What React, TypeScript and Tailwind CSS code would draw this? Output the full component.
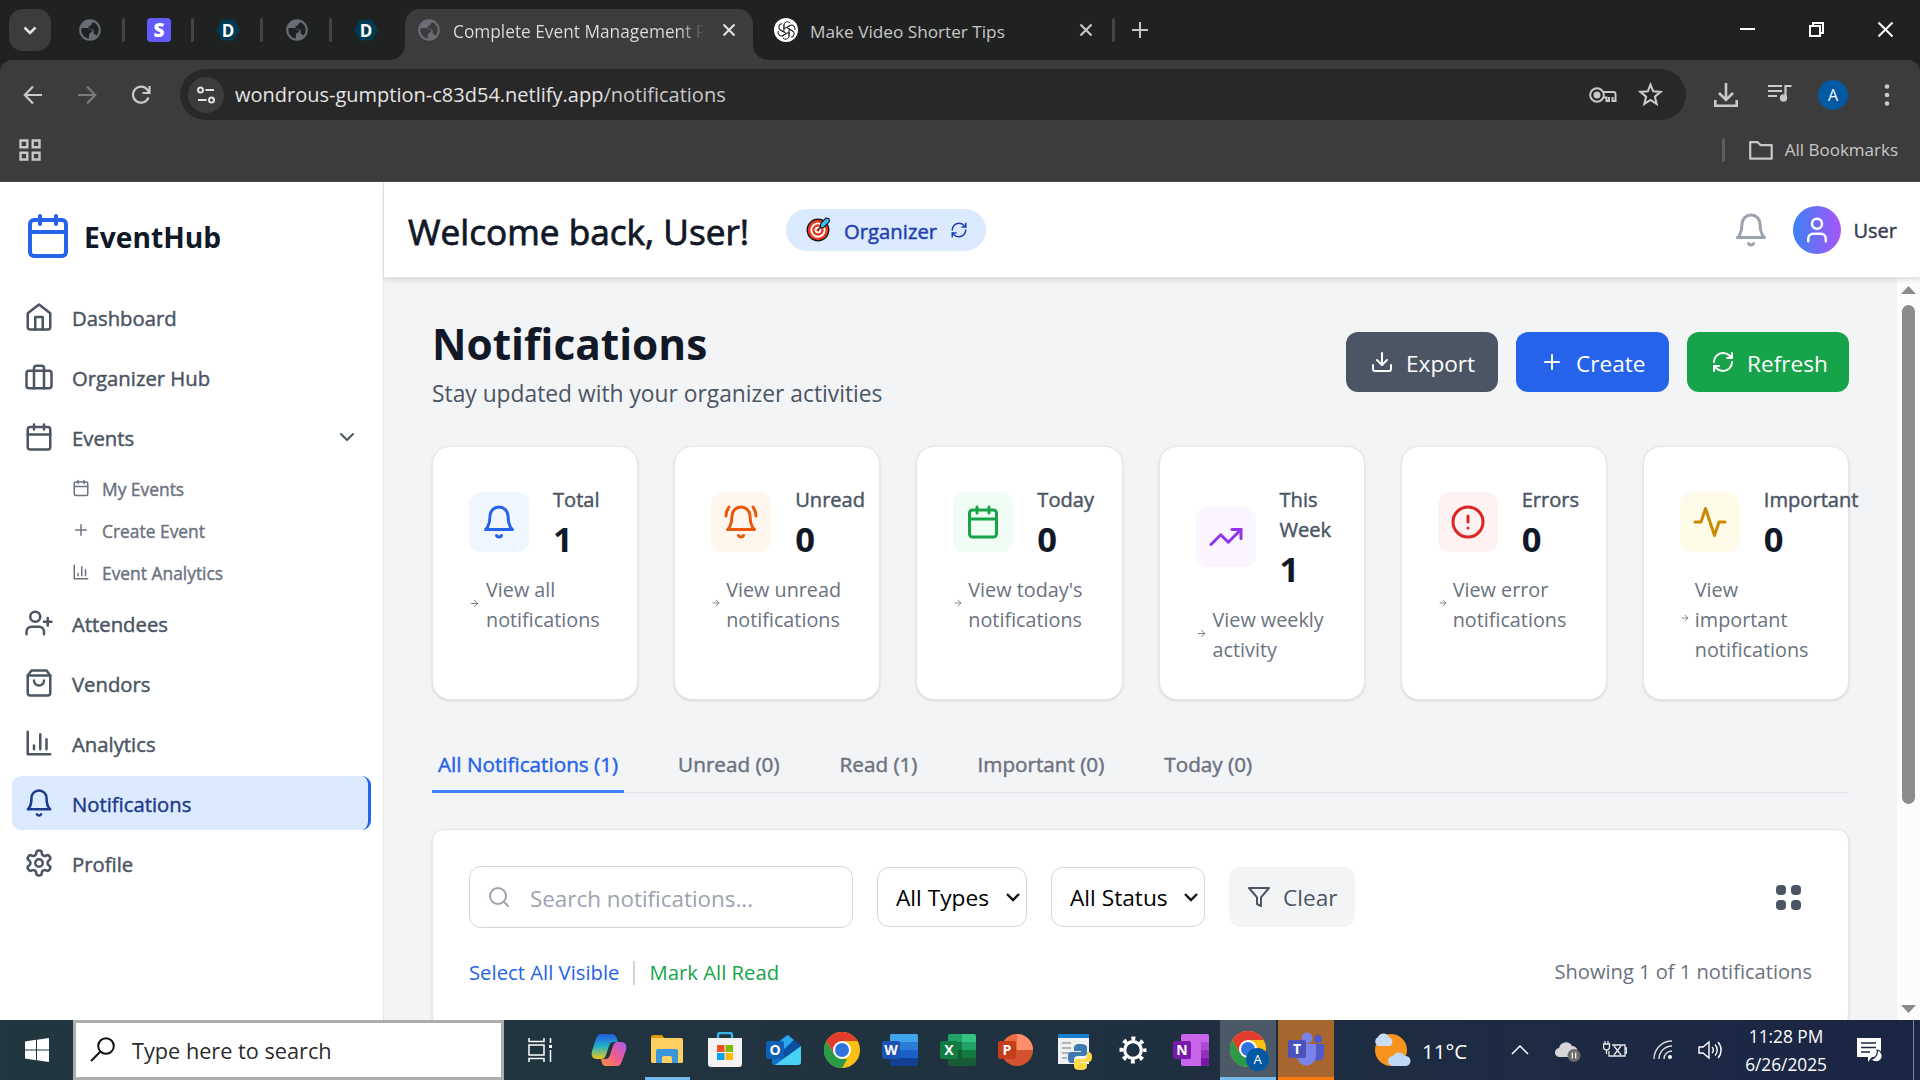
import React from 'react';
import {
  ArrowRight, ChevronDown, CircleAlert, Download, Plus, RefreshCw, Search, TrendingUp, User, UserPlus
} from 'lucide-react';
import { clsx } from 'clsx';

type IconProps = {
  className?: string;
  children?: React.ReactNode;
};

const Stroke = ({ className, children }: IconProps) => (
  <svg viewBox="0 0 24 24" fill="none" stroke="currentColor" strokeWidth="2" strokeLinecap="round" strokeLinejoin="round" className={clsx('shrink-0', className)}>
    {children}
  </svg>
);

const CalendarIcon = ({ className }: IconProps) => (
  <Stroke className={className}>
    <rect x="3" y="4" width="18" height="18" rx="2" />
    <path d="M16 2v4M8 2v4M3 10h18" />
  </Stroke>
);

const HomeIcon = ({ className }: IconProps) => (
  <Stroke className={className}>
    <path d="m3 9 9-7 9 7v11a2 2 0 0 1-2 2H5a2 2 0 0 1-2-2z" />
    <path d="M9 22V12h6v10" />
  </Stroke>
);

const BriefcaseIcon = ({ className }: IconProps) => (
  <Stroke className={className}>
    <rect x="2" y="7" width="20" height="14" rx="2" />
    <path d="M16 21V5a2 2 0 0 0-2-2h-4a2 2 0 0 0-2 2v16" />
  </Stroke>
);

const BagIcon = ({ className }: IconProps) => (
  <Stroke className={className}>
    <path d="M6 2 3 6v14a2 2 0 0 0 2 2h14a2 2 0 0 0 2-2V6l-3-4Z" />
    <path d="M3 6h18M16 10a4 4 0 0 1-8 0" />
  </Stroke>
);

const BarsIcon = ({ className }: IconProps) => (
  <Stroke className={className}>
    <path d="M3 3v18h18M18 17V9M13 17V5M8 17v-3" />
  </Stroke>
);

const BellIcon = ({ className }: IconProps) => (
  <Stroke className={className}>
    <path d="M6 8a6 6 0 0 1 12 0c0 7 3 9 3 9H3s3-2 3-9" />
    <path d="M10.3 21a1.94 1.94 0 0 0 3.4 0" />
  </Stroke>
);

const BellRingIcon = ({ className }: IconProps) => (
  <Stroke className={className}>
    <path d="M6 8a6 6 0 0 1 12 0c0 7 3 9 3 9H3s3-2 3-9" />
    <path d="M10.3 21a1.94 1.94 0 0 0 3.4 0M4 2C2.8 3.7 2 5.7 2 8M22 8c0-2.3-.8-4.3-2-6" />
  </Stroke>
);

const ActivityIcon = ({ className }: IconProps) => (
  <Stroke className={className}>
    <path d="M22 12h-4l-3 9L9 3l-3 9H2" />
  </Stroke>
);

const FunnelIcon = ({ className }: IconProps) => (
  <Stroke className={className}>
    <path d="M22 3H2l8 9.46V19l4 2v-8.54L22 3z" />
  </Stroke>
);

const SettingsIcon = ({ className }: IconProps) => (
  <Stroke className={className}>
    <path d="M12.22 2h-.44a2 2 0 0 0-2 2v.18a2 2 0 0 1-1 1.73l-.43.25a2 2 0 0 1-2 0l-.15-.08a2 2 0 0 0-2.73.73l-.22.38a2 2 0 0 0 .73 2.73l.15.1a2 2 0 0 1 1 1.72v.51a2 2 0 0 1-1 1.74l-.15.09a2 2 0 0 0-.73 2.73l.22.38a2 2 0 0 0 2.73.73l.15-.08a2 2 0 0 1 2 0l.43.25a2 2 0 0 1 1 1.73V20a2 2 0 0 0 2 2h.44a2 2 0 0 0 2-2v-.18a2 2 0 0 1 1-1.73l.43-.25a2 2 0 0 1 2 0l.15.08a2 2 0 0 0 2.73-.73l.22-.39a2 2 0 0 0-.73-2.73l-.15-.08a2 2 0 0 1-1-1.74v-.5a2 2 0 0 1 1-1.74l.15-.09a2 2 0 0 0 .73-2.73l-.22-.38a2 2 0 0 0-2.73-.73l-.15.08a2 2 0 0 1-2 0l-.43-.25a2 2 0 0 1-1-1.73V4a2 2 0 0 0-2-2z" />
    <circle cx="12" cy="12" r="3" />
  </Stroke>
);

/* ---------- browser ---------- */

const Globe = () => (
  <svg viewBox="0 0 24 24" className="size-[26px] shrink-0">
    <path fill="#6a6d73" d="M12 2C6.48 2 2 6.48 2 12s4.48 10 10 10 10-4.48 10-10S17.52 2 12 2zm-1 17.93c-3.95-.49-7-3.85-7-7.93 0-.62.08-1.21.21-1.79H9.5c1.6 0 1.5 1.29 3.5 1.29 1 0 1.5 1 1 1.8L12 15c-1 .5-1 1-1 2v2.93zm6.9-2.54c-.26-.81-1-1.39-1.9-1.39h-.5v-2.5c0-1.5-1-2.5-2.5-2.5-1.5 0-2.5-.5-2.5-1.5s.5-1.5 1.5-1.5c1.5 0 1-2 3-3.09C17.93 5.78 20 8.65 20 12c0 2.08-.8 3.97-2.1 5.39z" />
  </svg>
);

const HexFavicon = () => (
  <div className="relative flex size-[26px] items-center justify-center">
    <svg viewBox="0 0 26 26" className="absolute inset-0">
      <path fill="#003a52" d="M7 2.500h12L25 13l-6 10.500H7L1 13z" />
    </svg>
    <span className="relative text-[17px] leading-none font-bold text-white">D</span>
  </div>
);

const Favicon = ({ kind }: { kind: string }) => {
  if (kind === 'globe') return <Globe />;
  if (kind === 'hex') return <HexFavicon />;
  return (
    <div className="flex size-6 items-center justify-center rounded-[4px] bg-[#635bff] text-[19px] leading-none font-extrabold text-white">S</div>
  );
};

const CloseX = ({ className }: IconProps) => (
  <svg viewBox="0 0 14 14" className={clsx('size-[14px] shrink-0', className)} stroke="currentColor" strokeWidth="2.2">
    <path d="M1.500 1.500l11 11M12.500 1.500l-11 11" />
  </svg>
);

const pinned = ['globe', 'stripe', 'hex', 'globe', 'hex'];

const TabStrip = () => (
  <div className="flex h-[60px] bg-[#202221] text-[#c7c7c7]">
    <div className="mt-[9px] ml-[9px] flex size-[42px] items-center justify-center rounded-[14px] bg-[#3c3c3c]">
      <svg viewBox="0 0 14 9" className="h-[9px] w-[14px]" fill="none" stroke="#e3e3e3" strokeWidth="2.5"><path d="M1.500 1.500L7 7l5.500-5.500" /></svg>
    </div>
    <div className="ml-1 flex h-[60px] w-[350px] items-center">
      {pinned.map((kind, index) => (
        <React.Fragment key={index}>
          <div className="flex w-[66px] justify-center pl-1"><Favicon kind={kind} /></div>
          {index < pinned.length - 1 && <div className="ml-[1px] -mr-[1px] h-6 w-[3px] rounded bg-[#434443]" />}
        </React.Fragment>
      ))}
    </div>
    <div className="relative mt-[9px] flex h-[51px] w-[348px] items-center rounded-t-[15px] bg-[#3c3c3c] pr-[17px] pb-[9px] pl-[11px] text-[#dedede]">
      <svg viewBox="0 0 15 15" className="absolute bottom-0 -left-[15px] size-[15px]"><path fill="#3c3c3c" d="M15 0v15H0A15 15 0 0 0 15 0z" /></svg>
      <svg viewBox="0 0 15 15" className="absolute -right-[15px] bottom-0 size-[15px]"><path fill="#3c3c3c" d="M0 0v15h15A15 15 0 0 1 0 0z" /></svg>
      <Globe />
      <div className="ml-[11px] w-[252px] overflow-hidden bg-gradient-to-r from-[#dedede] from-90% to-[#3c3c3c] bg-clip-text pt-[4px] text-[17.3px] leading-[26px] whitespace-nowrap text-transparent">
        Complete Event Management P
      </div>
      <CloseX className="ml-auto" />
    </div>
    <div className="flex h-[60px] w-[362px] items-center pl-[21px]">
      <div className="flex size-6 items-center justify-center rounded-full bg-white">
        <svg viewBox="0 0 24 24" className="size-[19px]" fill="none" stroke="#222" strokeWidth="1.25">
          {[0, 60, 120, 180, 240, 300].map((angle) => (
            <path key={angle} d="M12.200 8.200L17 5.500M8.700 10V5.200a4.300 4.300 0 0 1 7.900-2.300M8.700 10v4" transform={`rotate(${angle} 12 12)`} />
          ))}
        </svg>
      </div>
      <span className="ml-3 pt-1 text-[17.2px] whitespace-nowrap">Make Video Shorter Tips</span>
      <CloseX className="ml-auto" />
      <div className="ml-[19px] h-6 w-[3px] rounded bg-[#434443]" />
    </div>
    <svg viewBox="0 0 16 16" className="mt-[22px] ml-[17px] size-4" stroke="currentColor" strokeWidth="2"><path d="M8 0v16M0 8h16" /></svg>
    <div className="mt-[22px] mr-[27px] ml-auto flex gap-[54px]">
      <svg viewBox="0 0 15 15" className="size-[15px]" fill="#fff"><path d="M0 6h15v2H0z" /></svg>
      <svg viewBox="0 0 15 15" className="size-[15px]" fill="none" stroke="#fff" strokeWidth="2"><path d="M1 4h10v10H1zM4 4V1h10v10h-3" /></svg>
      <svg viewBox="0 0 15 15" className="size-[15px]" stroke="#fff" strokeWidth="2"><path d="M.5.5l14 14M14.500.5l-14 14" /></svg>
    </div>
  </div>
);

const Toolbar = () => (
  <div className="flex h-[69px] items-center rounded-t-[12px] bg-[#3c3c3c] text-[#c9c9c9]">
    <svg viewBox="0 0 20 20" className="ml-[23px] size-5" fill="none" stroke="currentColor" strokeWidth="2.2"><path d="M19 10H2M10 1.500L1.800 10l8.200 8.500" /></svg>
    <svg viewBox="0 0 20 20" className="ml-[34px] size-5" fill="none" stroke="#7b7b7b" strokeWidth="2.2"><path d="M1 10h17M10 1.500l8.200 8.500L10 18.500" /></svg>
    <svg viewBox="0 0 20 20" className="ml-[34px] size-5" fill="none" stroke="currentColor" strokeWidth="2.2"><path d="M17.500 12.500A8 8 0 1 1 16.500 5l1.500 2M18.500 1v7h-7" /></svg>
    <div className="ml-[29px] flex h-[51px] w-[1506px] items-center rounded-full bg-[#282828] pr-[23px] pl-2">
      <div className="flex size-9 items-center justify-center rounded-full bg-[#3c3c3c]">
        <svg viewBox="0 0 18 18" className="size-[18px]" fill="none" stroke="#e0e0e0" strokeWidth="2"><circle cx="3.500" cy="4" r="2.500" /><path d="M8.500 4H17M1 14h8.500" /><circle cx="14.500" cy="14" r="2.500" /></svg>
      </div>
      <div className="ml-[11px] pt-px text-[20px] text-[#e4e4e4]">
        wondrous-gumption-c83d54.netlify.app<span className="text-[#c8c8c8]">/notifications</span>
      </div>
      <svg viewBox="0 0 28 16" className="ml-auto h-4 w-7" fill="none" stroke="currentColor" strokeWidth="2"><circle cx="8" cy="8" r="6.800" /><circle cx="8" cy="8" r="2.500" fill="currentColor" /><path d="M14 5h10.500a2 2 0 0 1 2 2v7h-3v-4M20 10v4h-2.500v-3.500h-3" /></svg>
      <svg viewBox="0 0 24 24" className="ml-[21px] size-[25px]" fill="none" stroke="currentColor" strokeWidth="2"><path d="M12 2.500l2.600 6.500 7 .5-5.400 4.500 1.700 7L12 17.200 6.100 21l1.700-7L2.400 9.500l7-.5z" /></svg>
    </div>
    <svg viewBox="0 0 24 24" className="ml-7 size-6" fill="none" stroke="currentColor" strokeWidth="2.6"><path d="M12 0v16M5 10l7 7 7-7M1.300 17v5.700h21.400V17" /></svg>
    <svg viewBox="0 0 24 18" className="-mt-[3px] ml-[30px] h-[18px] w-6" fill="none" stroke="currentColor" strokeWidth="2.2"><path d="M0 2h14M0 7h14M0 12h9M17.500 14V2h6" /><circle cx="15.500" cy="14" r="2.600" fill="currentColor" /></svg>
    <div className="ml-[26px] flex size-[30px] items-center justify-center rounded-full bg-[#0459a4] text-[16px] leading-none text-white">A</div>
    <svg viewBox="0 0 6 22" className="ml-[36px] h-[22px] w-[6px]" fill="currentColor"><circle cx="3" cy="2.500" r="2.300" /><circle cx="3" cy="11" r="2.300" /><circle cx="3" cy="19.500" r="2.300" /></svg>
  </div>
);

const BookmarkBar = () => (
  <div className="flex h-[53px] items-center border-b border-[#4a4a4a] bg-[#3c3c3c] pr-[22px] pb-[10px] pl-[19px] text-[#c7c7c7]">
    <svg viewBox="0 0 22 22" className="size-[22px]" fill="none" stroke="currentColor" strokeWidth="2.4"><path d="M1.500 1.500h6.800v6.800H1.500zM13.700 1.500h6.800v6.800h-6.800zM1.500 13.700h6.800v6.800H1.500zM13.700 13.700h6.800v6.800h-6.800z" /></svg>
    <div className="ml-auto h-6 w-[3px] rounded bg-[#5e5e5e]" />
    <svg viewBox="0 0 24 19" className="ml-6 h-[19px] w-6" fill="none" stroke="currentColor" strokeWidth="2.2" strokeLinejoin="round"><path d="M1.200 1.200h7.500l3 3h11v13.500H1.200z" /></svg>
    <span className="ml-3 text-[17px]">All Bookmarks</span>
  </div>
);

/* ---------- sidebar ---------- */

type NavItemProps = {
  label: string;
  icon: React.ReactNode;
  active?: boolean;
  open?: boolean;
};

const NavItem = ({ label, icon, active, open }: NavItemProps) => (
  <div
    className={clsx(
      'flex h-[54px] items-center rounded-[9px] pr-3 pl-3 text-[20.3px]',
      active ? 'border-r-[3px] border-[#2563eb] bg-[#dbeafe] text-[#1e3a8a]' : 'text-[#4b5563]'
    )}
  >
    {icon}
    <span className="ml-[18px] pt-[3px] [-webkit-text-stroke:0.45px]">{label}</span>
    {open && <ChevronDown className="ml-auto size-6" />}
  </div>
);

const SubItem = ({ label, icon }: NavItemProps) => (
  <div className="flex h-[42px] items-center gap-3 pl-[60px] text-[17.4px] text-[#6b7280]">
    {icon}
    <span className="pt-[2px] [-webkit-text-stroke:0.4px]">{label}</span>
  </div>
);

const Sidebar = () => (
  <aside className="flex w-[384px] shrink-0 flex-col border-r border-gray-200 bg-white px-3">
    <div className="mt-[30px] flex h-12 items-center pl-3 text-[#111827]">
      <CalendarIcon className="size-12 text-[#2563eb]" />
      <span className="ml-3 pt-[2px] text-[28.2px] font-bold">EventHub</span>
    </div>
    <nav className="mt-[30px] flex flex-col gap-[6px]">
      <NavItem label="Dashboard" icon={<HomeIcon className="size-[30px]" />} />
      <NavItem label="Organizer Hub" icon={<BriefcaseIcon className="size-[30px]" />} />
      <NavItem label="Events" icon={<CalendarIcon className="size-[30px]" />} open />
      <div className="-mt-[3px] -mb-[3px] flex flex-col">
        <SubItem label="My Events" icon={<CalendarIcon className="size-[18px]" />} />
        <SubItem label="Create Event" icon={<Plus className="size-[18px]" />} />
        <SubItem label="Event Analytics" icon={<BarsIcon className="size-[18px]" />} />
      </div>
      <NavItem label="Attendees" icon={<UserPlus className="size-[30px]" />} />
      <NavItem label="Vendors" icon={<BagIcon className="size-[30px]" />} />
      <NavItem label="Analytics" icon={<BarsIcon className="size-[30px]" />} />
      <NavItem label="Notifications" icon={<BellIcon className="size-[30px]" />} active />
      <NavItem label="Profile" icon={<SettingsIcon className="size-[30px]" />} />
    </nav>
  </aside>
);

/* ---------- content ---------- */

const TargetEmoji = () => (
  <svg viewBox="0 0 24 24" className="size-[25px]">
    <circle cx="11.500" cy="12.500" r="11" fill="#111" />
    <circle cx="11.500" cy="12.500" r="9.800" fill="#e8391f" />
    <circle cx="11.500" cy="12.500" r="7.300" fill="#fff" />
    <circle cx="11.500" cy="12.500" r="5.500" fill="#e8391f" />
    <circle cx="11.500" cy="12.500" r="3.200" fill="#fff" />
    <circle cx="11.500" cy="12.500" r="1.500" fill="#e8391f" />
    <path d="M11.500 12.500l5-5.500" stroke="#222" strokeWidth="1.3" />
    <path d="M14 6.500L19 1l3 .5.500 3-5.500 5.500-3 .5z" fill="#35c1f1" stroke="#111" strokeWidth="1" />
  </svg>
);

const Header = () => (
  <header className="relative z-10 flex h-24 shrink-0 items-center border-b border-gray-200 bg-white pr-[23px] pl-6 shadow-[0_2px_5px_rgba(0,0,0,0.12)]">
    <h1 className="w-[378px] pt-[3px] text-[35.2px] whitespace-nowrap text-[#111827] [-webkit-text-stroke:0.8px]">Welcome back, User!</h1>
    <div className="flex h-[42px] w-[200px] items-center rounded-full bg-[#dbeafe] pl-5 text-[20.3px] text-[#1e40af]">
      <TargetEmoji />
      <span className="ml-[13px] w-[94px] pt-[3px] [-webkit-text-stroke:0.45px]">Organizer</span>
      <RefreshCw className="ml-3 size-[18px]" />
    </div>
    <BellIcon className="ml-auto size-9 text-[#9ca3af]" />
    <div className="ml-6 flex size-12 items-center justify-center rounded-full bg-[linear-gradient(to_right,#3b82f6,#a855f7)] text-white">
      <User className="size-[30px]" />
    </div>
    <span className="ml-3 pt-[3px] text-[20px] text-[#374151] [-webkit-text-stroke:0.45px]">User</span>
  </header>
);

type ActionProps = {
  label: string;
  icon: React.ReactNode;
  className: string;
};

const ActionButton = ({ label, icon, className }: ActionProps) => (
  <button className={clsx('flex h-[60px] items-center gap-3 rounded-[12px] pl-6 text-[22.6px] text-white', className)}>
    {icon}
    <span className="pt-[3px]">{label}</span>
  </button>
);

type StatCardProps = {
  title: string[];
  value: number;
  hint: string[];
  icon: React.ReactNode;
  tone: string;
  tight?: boolean;
};

const StatCard = ({ title, value, hint, icon, tone, tight }: StatCardProps) => (
  <div className="h-[254px] min-w-0 rounded-[18px] border border-gray-200 bg-white p-9 shadow-sm">
    <div className="flex items-center">
      <div className={clsx('flex size-[60px] shrink-0 items-center justify-center rounded-[12px]', tone)}>{icon}</div>
      <div className="ml-6">
        <p className="-mb-[2px] pt-[2px] text-[20.1px] leading-[30px] whitespace-nowrap text-[#4b5563] [-webkit-text-stroke:0.45px]">
          {title.map((line) => <span key={line} className="block">{line}</span>)}
        </p>
        <p className="-mb-[2px] pt-[2px] text-[34.5px] leading-[48px] font-bold text-[#111827]">{value}</p>
      </div>
    </div>
    <div className="mt-3 flex items-center text-[19.8px] leading-[30px] whitespace-nowrap text-[#6b7280]">
      <ArrowRight className={clsx('shrink-0', tight ? 'size-[10px]' : 'size-[11px]')} />
      <p className={clsx('-mb-[2px] pt-[2px]', tight ? 'ml-[5px]' : 'ml-[6px]')}>
        {hint.map((line) => <span key={line} className="block">{line}</span>)}
      </p>
    </div>
  </div>
);

const stats: StatCardProps[] = [
  { title: ['Total'], value: 1, hint: ['View all', 'notifications'], icon: <BellIcon className="size-9" />, tone: 'bg-[#eff6ff] text-[#2563eb]' },
  { title: ['Unread'], value: 0, hint: ['View unread', 'notifications'], icon: <BellRingIcon className="size-9" />, tone: 'bg-[#fff7ed] text-[#ea580c]', tight: true },
  { title: ['Today'], value: 0, hint: ["View today's", 'notifications'], icon: <CalendarIcon className="size-9" />, tone: 'bg-[#f0fdf4] text-[#16a34a]', tight: true },
  { title: ['This', 'Week'], value: 1, hint: ['View weekly', 'activity'], icon: <TrendingUp className="size-9" />, tone: 'bg-[#faf5ff] text-[#9333ea]' },
  { title: ['Errors'], value: 0, hint: ['View error', 'notifications'], icon: <CircleAlert className="size-9" />, tone: 'bg-[#fef2f2] text-[#dc2626]', tight: true },
  { title: ['Important'], value: 0, hint: ['View', 'important', 'notifications'], icon: <ActivityIcon className="size-9" />, tone: 'bg-[#fefce8] text-[#ca8a04]', tight: true },
];

const tabs = ['All Notifications (1)', 'Unread (0)', 'Read (1)', 'Important (0)', 'Today (0)'];

const SelectBox = ({ label, className }: { label: string; className: string }) => (
  <div className={clsx('flex h-[60px] items-center justify-between rounded-[12px] border border-gray-300 pr-[6px] pl-[18px] whitespace-nowrap text-black', className)}>
    <span className="pt-[3px]">{label}</span>
    <svg viewBox="0 0 14 9" className="h-[9px] w-[14px]" fill="none" stroke="#111" strokeWidth="2.4"><path d="M1 1l6 6 6-6" /></svg>
  </div>
);

const Filters = () => (
  <section className="mt-9 h-[198px] shrink-0 rounded-[12px] border border-gray-200 bg-white p-9 shadow-sm">
    <div className="flex items-center text-[22.7px]">
      <div className="flex h-[62px] w-[384px] items-center rounded-[12px] border border-gray-300 pl-[17px] text-[#9ca3af]">
        <Search className="size-6" />
        <span className="ml-[19px] pt-[3px] text-[22.4px]">Search notifications...</span>
      </div>
      <SelectBox label="All Types" className="ml-6 w-[150px]" />
      <SelectBox label="All Status" className="ml-6 w-[154px]" />
      <div className="ml-6 flex h-[60px] w-[126px] items-center gap-3 rounded-[12px] bg-[#f3f4f6] pl-[18px] text-[#4b5563]">
        <FunnelIcon className="size-6" />
        <span className="pt-[3px]">Clear</span>
      </div>
      <div className="mr-[11px] ml-auto grid grid-cols-2 gap-[5px]">
        {[0, 1, 2, 3].map((cell) => <div key={cell} className="size-[10px] rounded-[4px] bg-[#4b5563]" />)}
      </div>
    </div>
    <div className="mt-[28px] flex h-[30px] items-center text-[20.3px]">
      <span className="pt-[2px] text-[#2563eb]">Select All Visible</span>
      <div className="mx-[14px] mt-1 h-6 w-[2px] bg-gray-300" />
      <span className="pt-[2px] text-[#16a34a]">Mark All Read</span>
      <span className="ml-auto pt-[2px] text-[20.1px] text-[#6b7280]">Showing 1 of 1 notifications</span>
    </div>
  </section>
);

const Scrollbar = () => (
  <div className="flex w-[23px] shrink-0 flex-col items-center bg-[#fcfcfc]">
    <svg viewBox="0 0 15 8" className="mt-[8px] h-2 w-[15px]" fill="#8b8b8b"><path d="M7.500 0L15 8H0z" /></svg>
    <div className="mt-[11px] h-[499px] w-[13px] rounded-full bg-[#8b8b8b]" />
    <svg viewBox="0 0 15 8" className="mt-auto mb-[7px] h-2 w-[15px]" fill="#8b8b8b"><path d="M7.500 8L15 0H0z" /></svg>
  </div>
);

const Content = () => (
  <main className="flex min-h-0 flex-1 bg-[#f3f4f6]">
    <div className="flex min-w-0 flex-1 flex-col overflow-hidden px-12">
      <div className="mt-[36px] flex h-[96px] shrink-0">
        <div>
          <h2 className="mt-[3px] text-[42.4px] leading-[54px] font-bold text-[#111827]">Notifications</h2>
          <p className="mt-[5px] text-[22.8px] leading-9 text-[#4b5563]">Stay updated with your organizer activities</p>
        </div>
        <div className="mt-[18px] ml-auto flex gap-[18px]">
          <ActionButton label="Export" icon={<Download className="size-6" />} className="w-[152px] bg-[#4b5563]" />
          <ActionButton label="Create" icon={<Plus className="size-6" />} className="w-[153px] bg-[#2563eb]" />
          <ActionButton label="Refresh" icon={<RefreshCw className="size-6" />} className="w-[162px] bg-[#16a34a]" />
        </div>
      </div>
      <div className="mt-9 grid shrink-0 grid-cols-6 gap-9">
        {stats.map((stat) => <StatCard key={stat.title[0]} {...stat} />)}
      </div>
      <div className="mt-9 flex h-[57px] shrink-0 gap-12 border-b border-gray-200 text-[20.7px] [-webkit-text-stroke:0.45px]">
        {tabs.map((tab, index) => (
          <div
            key={tab}
            className={clsx(
              'flex h-[57px] items-center px-[6px] whitespace-nowrap',
              index === 0 ? 'border-b-[3px] border-[#3b82f6] pt-[3px] text-[#2563eb]' : 'text-[#6b7280]'
            )}
          >
            {tab}
          </div>
        ))}
      </div>
      <Filters />
    </div>
    <Scrollbar />
  </main>
);

/* ---------- taskbar ---------- */

type OfficeProps = {
  letter: string;
  badge: string;
  children: React.ReactNode;
};

const OfficeIcon = ({ letter, badge, children }: OfficeProps) => (
  <svg viewBox="0 0 36 36" className="size-9">
    {children}
    <rect x="0" y="9" width="18" height="18" rx="2" fill={badge} />
    <text x="9" y="23" textAnchor="middle" fill="#fff" fontSize="14" fontWeight="700">{letter}</text>
  </svg>
);

const ChromeIcon = ({ className }: IconProps) => (
  <svg viewBox="0 0 36 36" className={clsx('size-9', className)}>
    <circle cx="18" cy="18" r="18" fill="#fbc116" />
    <path d="M2.400 9A18 18 0 0 1 33.600 9H18l-7.800 13.500z" fill="#e33b2e" />
    <path d="M2.400 9l7.800 13.500L18 27h5.200L18 36A18 18 0 0 1 2.400 9z" fill="#2b9a48" />
    <circle cx="18" cy="18" r="9" fill="#fff" />
    <circle cx="18" cy="18" r="7" fill="#2f73e0" />
  </svg>
);

const CopilotIcon = () => (
  <svg viewBox="0 0 36 36" className="size-9">
    <defs>
      <linearGradient id="copA" x1="0" y1="0" x2="0" y2="1"><stop offset="0" stopColor="#2458e0" /><stop offset=".5" stopColor="#21b2c8" /><stop offset="1" stopColor="#f2c419" /></linearGradient>
      <linearGradient id="copB" x1="1" y1="0" x2="0" y2="1"><stop offset="0" stopColor="#a35df2" /><stop offset=".5" stopColor="#ee5a90" /><stop offset="1" stopColor="#fb9040" /></linearGradient>
    </defs>
    <path d="M10 2h11c3 0 4 2 5 5l1 3h-4c-3 0-4 1-5 4l-3 9c-1 3-3 4-5 4H6c-5 0-6-4-5-8L5 7c1-3 2-5 5-5z" fill="url(#copA)" />
    <path d="M26 34H15c-3 0-4-2-5-7h4c2 0 4-1 5-4l3-9c1-3 2-4 5-4h3c5 0 6 4 5 8l-4 11c-1 3-2 5-5 5z" fill="url(#copB)" />
  </svg>
);

const apps = [
  <CopilotIcon />,
  <svg viewBox="0 0 36 30" className="h-[30px] w-9"><path d="M2 2a2 2 0 0 1 2-2h9l3 4H2z" fill="#dc9a00" /><rect x="2" y="3" width="32" height="25" rx="1.500" fill="#fdd060" /><path d="M7 28V16a2 2 0 0 1 2-2h18a2 2 0 0 1 2 2v12h-6v-5a2 2 0 0 0-2-2h-6a2 2 0 0 0-2 2v5z" fill="#3b96dd" /></svg>,
  <svg viewBox="0 0 36 36" className="size-9"><path d="M11 8V3a2 2 0 0 1 2-2h10a2 2 0 0 1 2 2v5" fill="none" stroke="#3cb4ea" strokeWidth="2.4" /><path d="M1 6h34v26a3 3 0 0 1-3 3H4a3 3 0 0 1-3-3z" fill="#f3f3f3" /><path d="M10 13h7.500v7H10z" fill="#f25022" /><path d="M18.500 13H26v7h-7.500z" fill="#7fba00" /><path d="M10 21h7.500v7H10z" fill="#00a4ef" /><path d="M18.500 21H26v7h-7.500z" fill="#ffb900" /></svg>,
  <OfficeIcon letter="O" badge="#0f5fb8"><path d="M6 14L21 3l14 11v16a3 3 0 0 1-3 3H9a3 3 0 0 1-3-3z" fill="#1272c8" /><path d="M12 11L22 3l6 5-16 14z" fill="#29a8ea" /><path d="M35 14v16a3 3 0 0 1-3 3H9z" fill="#49d0f5" /><path d="M35 14L18 26V18L28 8z" fill="#0b50a0" /></OfficeIcon>,
  <ChromeIcon />,
  <OfficeIcon letter="W" badge="#1a52b5"><rect x="8" y="2" width="28" height="32" rx="2" fill="#1c5fc6" /><path d="M8 4a2 2 0 0 1 2-2h24a2 2 0 0 1 2 2v6H8z" fill="#41a5ee" /><path d="M8 10h28v8H8z" fill="#2b7cd3" /><path d="M8 26h28v6a2 2 0 0 1-2 2H10a2 2 0 0 1-2-2z" fill="#123f94" /></OfficeIcon>,
  <OfficeIcon letter="X" badge="#107c41"><rect x="8" y="2" width="28" height="32" rx="2" fill="#185c37" /><path d="M8 4a2 2 0 0 1 2-2h12v8H8z" fill="#21a366" /><path d="M22 2h12a2 2 0 0 1 2 2v6H22z" fill="#33c481" /><path d="M8 10h14v8H8z" fill="#107c41" /><path d="M22 10h14v8H22z" fill="#21a366" /><path d="M22 18h14v8H22z" fill="#107c41" /></OfficeIcon>,
  <OfficeIcon letter="P" badge="#c43e1c"><circle cx="19" cy="18" r="16" fill="#d35230" /><path d="M19 2a16 16 0 0 1 16 16H19z" fill="#ff8f6b" /><path d="M3 18A16 16 0 0 1 19 2v16z" fill="#ed6c47" /></OfficeIcon>,
  <svg viewBox="0 0 36 40" className="mt-[2px] h-10 w-9"><rect x="1" y="3" width="31" height="30" fill="#eef0f1" /><path d="M1 3h31v4H1z" fill="#1681cf" /><path d="M5 12h9M5 17h9M5 22h7M5 27h5" stroke="#9aa3a9" strokeWidth="1.5" /><path d="M23 13c-5 0-6 2-6 4v3h7v1H14c-3 0-3 3-3 6s1 5 4 5h2v-4c0-2 2-3 4-3h6c2 0 3-1 3-3v-5c0-3-2-4-7-4z" fill="#3d78b0" /><path d="M24 39c5 0 6-2 6-4v-3h-7v-1h9c2 0 3-3 3-5s-1-5-3-5h-2v4c0 2-2 3-4 3h-6c-2 0-3 1-3 3v4c0 3 2 4 7 4z" fill="#ffd845" /></svg>,
  <svg viewBox="0 0 28 28" className="size-[28px]" fill="none" stroke="#fff"><circle cx="14" cy="14" r="8.300" strokeWidth="3.2" /><circle cx="14" cy="14" r="11.500" strokeWidth="4" strokeDasharray="4 5.03" strokeDashoffset="2" /></svg>,
  <OfficeIcon letter="N" badge="#7719aa"><rect x="8" y="2" width="28" height="32" rx="2" fill="#ca64ea" /><path d="M28 10h8v8h-8z" fill="#ae4bd5" /><path d="M28 18h8v8h-8z" fill="#9332bf" /><path d="M28 26h8v6a2 2 0 0 1-2 2h-6z" fill="#7719aa" /></OfficeIcon>,
];

const Taskbar = () => (
  <footer className="flex h-[60px] shrink-0 bg-gradient-to-r from-[#21373f] via-[#20323f] to-[#1a2544] text-white">
    <div className="flex w-[73px] items-center justify-center">
      <svg viewBox="0 0 24 24" className="size-6" fill="#fff"><path d="M0 3.400l11-1.600v9.700H0zM12 1.700L24 0v11.500H12zM0 12.500h11v9.700L0 20.600zM12 12.500h12V24l-12-1.700z" /></svg>
    </div>
    <div className="flex w-[431px] items-center border-[3px] border-[#adadad] bg-white pl-[14px] text-[21.7px] text-[#2b2b2b]">
      <svg viewBox="0 0 25 25" className="-mt-[2px] size-[25px]" fill="none" stroke="#111" strokeWidth="2"><circle cx="16" cy="9" r="7.800" /><path d="M10.500 14.500L1 24" /></svg>
      <span className="ml-[17px] pt-[3px]">Type here to search</span>
    </div>
    <div className="flex w-[76px] items-center justify-center pr-1">
      <svg viewBox="0 0 24 24" className="size-6" fill="none" stroke="#fff" strokeWidth="1.5"><path d="M1 0v3.500h15V0M1 7h15v10H1zM1 24v-3.500h15V24M22.500 0v5M22.500 12v12" /><path d="M21 7h3v3h-3z" fill="#fff" stroke="none" /></svg>
    </div>
    {apps.map((app, index) => (
      <div
        key={index}
        className={clsx('flex w-[58.2px] items-center justify-center', index === 1 && 'bg-[linear-gradient(#76b9ed,#76b9ed)] bg-[length:45px_3px] bg-bottom bg-no-repeat')}
      >
        {app}
      </div>
    ))}
    <div className="relative flex w-[56px] items-center justify-center border-b-[3px] border-[#76b9ed] bg-[#4b5a66]">
      <ChromeIcon className="size-9" />
      <div className="absolute right-[7px] bottom-[6px] flex size-[23px] items-center justify-center rounded-full bg-[#0459a4] text-[13px] leading-none">A</div>
    </div>
    <div className="ml-[2px] flex w-[56px] items-center justify-center border-b-[3px] border-[#ff7a0a] bg-[#a8662f]">
      <OfficeIcon letter="T" badge="#4b53bc">
        <circle cx="30" cy="8" r="4" fill="#5059c9" />
        <path d="M24 13h12v11a6 6 0 0 1-9 5z" fill="#5059c9" />
        <circle cx="19" cy="7" r="5.500" fill="#7b83eb" />
        <path d="M9 13h19v12a9.500 9.500 0 0 1-19 0z" fill="#7b83eb" />
      </OfficeIcon>
    </div>
    <div className="ml-[39px] flex w-[140px] items-center">
      <svg viewBox="0 0 38 36" className="h-9 w-[38px]"><circle cx="18" cy="18" r="16" fill="#f6941d" /><path d="M5 14a5 5 0 0 1 0-9 6 6 0 0 1 11 0 5 5 0 0 1 1 9z" fill="#c9ddf7" /><path d="M20 34a5 5 0 0 1 0-10 7 7 0 0 1 12 0 5 5 0 0 1 1 10z" fill="#c0d8f6" /></svg>
      <span className="ml-[11px] pt-[3px] text-[20.5px]">11°C</span>
    </div>
    <svg viewBox="0 0 18 10" className="mt-[25px] -ml-[2px] h-[10px] w-[18px]" fill="none" stroke="#fff" strokeWidth="1.5"><path d="M1 9l8-8 8 8" /></svg>
    <svg viewBox="0 0 26 20" className="mt-[22px] ml-[26px] h-5 w-[26px]"><path d="M5 15a4.500 4.500 0 0 1-1-9A7 7 0 0 1 17 4a6 6 0 0 1 3 11z" fill="#d6d6d6" /><circle cx="19" cy="13.500" r="6.500" fill="#6a6a6a" /><path d="M17.300 10.500v6M20.700 10.500v6" stroke="#fff" strokeWidth="1.2" /></svg>
    <svg viewBox="0 0 24 18" className="mt-[21px] ml-[22px] h-[18px] w-6" fill="none" stroke="#e8e8e8" strokeWidth="1.3"><path d="M9 4h13v11H6v-5M22 7h1.500v5H22M11 5l7 9M18 5l-7 9M2 0v3M5 0v3M.5 3h6v3a3 3 0 0 1-6 0zM3.500 9v4" /></svg>
    <svg viewBox="0 0 20 20" className="mt-[20px] ml-[26px] size-5" fill="none" stroke="#dcdcdc" strokeWidth="1.4"><path d="M1 19A18 18 0 0 1 19 1M6 19A13 13 0 0 1 19 6M11 19a8 8 0 0 1 8-8" /><circle cx="17" cy="17" r="2" fill="#fff" stroke="none" /></svg>
    <svg viewBox="0 0 24 20" className="mt-[20px] ml-[25px] h-5 w-6" fill="none" stroke="#fff" strokeWidth="1.4"><path d="M1 7h4l6-5v16l-6-5H1zM14 7a4 4 0 0 1 0 6M17 4.500a8 8 0 0 1 0 11M20 2a12 12 0 0 1 0 16" /></svg>
    <div className="ml-[19px] w-[90px] text-center text-[17.3px] leading-[28px] whitespace-nowrap">
      <p className="mt-[3px]">11:28 PM</p>
      <p>6/26/2025</p>
    </div>
    <svg viewBox="0 0 26 26" className="mt-[18px] ml-[25px] size-[26px]"><path d="M1 0h24v19h-9l-4 5v-5H1z" fill="#fff" /><path d="M5 5h15M5 9.500h15M5 14h9" stroke="#1b2a42" strokeWidth="1.6" /><path d="M21 12a6 6 0 1 1-6 9 7 7 0 0 0 6-9z" fill="#fff" stroke="#1b2a42" strokeWidth="1.2" /></svg>
    <div className="mr-[6px] ml-auto w-px bg-[#7f8894]" />
  </footer>
);

export default function App() {
  return (
    <div className="flex h-[1080px] w-[1920px] flex-col overflow-hidden bg-white font-['Open_Sans',sans-serif]">
      <TabStrip />
      <div className="bg-[#202221]"><Toolbar /></div>
      <BookmarkBar />
      <div className="flex min-h-0 flex-1">
        <Sidebar />
        <div className="flex min-w-0 flex-1 flex-col">
          <Header />
          <Content />
        </div>
      </div>
      <Taskbar />
    </div>
  );
}
